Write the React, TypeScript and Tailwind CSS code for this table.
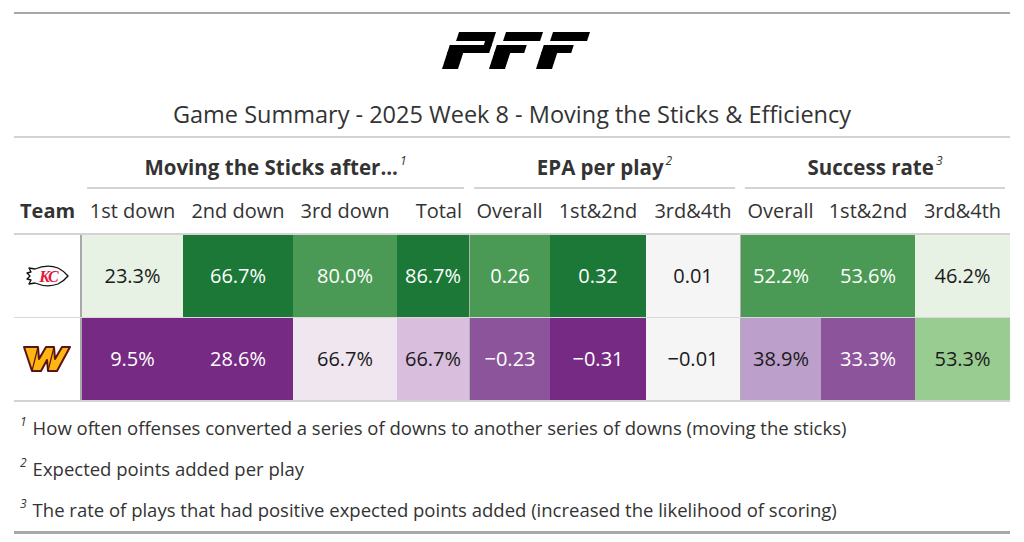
const GRID = "grid grid-cols-[68px_101px_110px_104px_72px_81px_96px_94px_81px_94px_95px]";

type Cell = { v: string; bg: string; fg: string; edge?: boolean };

const kc: Cell[] = [
  { v: "23.3%", bg: "bg-[#e7f2e4]", fg: "text-[#1a1a1a]" },
  { v: "66.7%", bg: "bg-[#1b7837]", fg: "text-white" },
  { v: "80.0%", bg: "bg-[#4a9a55]", fg: "text-white" },
  { v: "86.7%", bg: "bg-[#1b7837]", fg: "text-white" },
  { v: "0.26", bg: "bg-[#4a9a55]", fg: "text-white", edge: true },
  { v: "0.32", bg: "bg-[#1b7837]", fg: "text-white" },
  { v: "0.01", bg: "bg-[#f5f5f5]", fg: "text-[#1a1a1a]" },
  { v: "52.2%", bg: "bg-[#4a9a55]", fg: "text-white", edge: true },
  { v: "53.6%", bg: "bg-[#4a9a55]", fg: "text-white" },
  { v: "46.2%", bg: "bg-[#e7f2e4]", fg: "text-[#1a1a1a]" },
];

const was: Cell[] = [
  { v: "9.5%", bg: "bg-[#762a83]", fg: "text-white" },
  { v: "28.6%", bg: "bg-[#762a83]", fg: "text-white" },
  { v: "66.7%", bg: "bg-[#f0e6f0]", fg: "text-[#1a1a1a]" },
  { v: "66.7%", bg: "bg-[#d9bfdd]", fg: "text-[#1a1a1a]" },
  { v: "\u22120.23", bg: "bg-[#8c559b]", fg: "text-white", edge: true },
  { v: "\u22120.31", bg: "bg-[#762a83]", fg: "text-white" },
  { v: "\u22120.01", bg: "bg-[#f5f5f5]", fg: "text-[#1a1a1a]" },
  { v: "38.9%", bg: "bg-[#bd9fcb]", fg: "text-[#1a1a1a]", edge: true },
  { v: "33.3%", bg: "bg-[#8c559b]", fg: "text-white" },
  { v: "53.3%", bg: "bg-[#99cc91]", fg: "text-[#1a1a1a]" },
];

function PffLogo() {
  return (
    <svg width="148" height="37" viewBox="0 0 148 37">
      <g transform="translate(12 0) skewX(-18)" fill="#000">
        {/* P */}
        <rect x="5" y="0" width="37" height="9" />
        <rect x="34" y="8" width="8" height="6" />
        <rect x="0" y="13" width="42" height="8" />
        <rect x="0" y="20" width="16" height="17" />
        {/* F */}
        <rect x="52" y="0" width="37" height="9" />
        <rect x="47" y="13" width="30" height="8" />
        <rect x="47" y="20" width="16" height="17" />
        {/* F */}
        <rect x="99" y="0" width="37" height="9" />
        <rect x="94" y="13" width="30" height="8" />
        <rect x="94" y="20" width="16" height="17" />
      </g>
    </svg>
  );
}

function ChiefsLogo() {
  return (
    <svg width="44" height="24" viewBox="0 0 44 24">
      <path
        d="M4 4 L10 5 Q22 0 33 4 Q39 7 43 12 Q39 17 33 20 Q22 24 10 19 L4 20 L6 16 L2 15 L5 12 L2 9 L6 8 Z"
        fill="#fff"
        stroke="#111"
        strokeWidth="1.3"
        strokeLinejoin="round"
      />
      <text x="23" y="17.5" textAnchor="middle" fontSize="16" fontWeight="900" fontStyle="italic" fontFamily="Liberation Serif, serif" fill="#e31837" letterSpacing="-2">
        KC
      </text>
    </svg>
  );
}

function CommandersLogo() {
  return (
    <svg width="50" height="28" viewBox="0 0 50 28">
      <polygon
        points="2,2 16,2 17,14 24,2 32,2 33,14 40,2 48,2 35,26 26,26 25,15 19,26 10,26"
        fill="#ffb612"
        stroke="#5a1414"
        strokeWidth="2"
        strokeLinejoin="round"
      />
      <path d="M16 2 L10 26 M32 2 L26 26" stroke="#5a1414" strokeWidth="1.2" />
    </svg>
  );
}

function Sup({ n }: { n: string }) {
  return <span className="relative -top-[10px] ml-[2px] text-[12px] italic font-normal">{n}</span>;
}

function DataRow({ logo, cells, last }: { logo: React.ReactNode; cells: Cell[]; last?: boolean }) {
  return (
    <div className={`${GRID} ${last ? "" : "border-b border-[#d9d9d9]"}`}>
      <div className="h-[82px] flex items-center justify-center border-r-2 border-[#a8a8a8] bg-white">{logo}</div>
      {cells.map((c, i) => (
        <div
          key={i}
          className={`h-[82px] flex items-center justify-center text-[20px] ${c.bg} ${c.fg} ${c.edge ? "border-l border-[#b0b0b0]" : ""}`}
        >
          {c.v}
        </div>
      ))}
    </div>
  );
}

export default function App() {
  return (
    <div className="w-[1024px] h-[542px] bg-white px-[14px] pt-[12px] text-[#333] font-['Open_Sans',sans-serif]">
      <div className="border-t-2 border-[#a8a8a8]">
        {/* heading */}
        <div className="flex flex-col items-center border-b-2 border-[#d3d3d3] pb-[7px]">
          <div className="mt-[18px] ml-[8px]">
            <PffLogo />
          </div>
          <div className="mt-[30px] h-[30px] leading-[30px] text-[23.5px] text-[#333]">
            Game Summary - 2025 Week 8 - Moving the Sticks &amp; Efficiency
          </div>
        </div>

        {/* spanners */}
        <div className={GRID}>
          <div className="h-[51px]" />
          <div className="col-span-4 flex flex-col justify-end">
            <div className="mx-[5px] border-b-2 border-[#d3d3d3] pb-[2px] text-center text-[20.5px] font-bold leading-[28px]">
              Moving the Sticks after...<Sup n="1" />
            </div>
          </div>
          <div className="col-span-3 flex flex-col justify-end">
            <div className="mx-[5px] border-b-2 border-[#d3d3d3] pb-[2px] text-center text-[20.5px] font-bold leading-[28px]">
              EPA per play<Sup n="2" />
            </div>
          </div>
          <div className="col-span-3 flex flex-col justify-end">
            <div className="mx-[5px] border-b-2 border-[#d3d3d3] pb-[2px] text-center text-[20.5px] font-bold leading-[28px]">
              Success rate<Sup n="3" />
            </div>
          </div>
        </div>

        {/* column labels */}
        <div className={`${GRID} border-b-2 border-[#d3d3d3] text-[20px]`}>
          <div className="h-[44px] flex items-center pl-[6px] font-bold">Team</div>
          <div className="h-[44px] flex items-center justify-center">1st down</div>
          <div className="h-[44px] flex items-center justify-center">2nd down</div>
          <div className="h-[44px] flex items-center justify-center">3rd down</div>
          <div className="h-[44px] flex items-center justify-end pr-[7px]">Total</div>
          <div className="h-[44px] flex items-center justify-center">Overall</div>
          <div className="h-[44px] flex items-center justify-center">1st&amp;2nd</div>
          <div className="h-[44px] flex items-center justify-center">3rd&amp;4th</div>
          <div className="h-[44px] flex items-center justify-center">Overall</div>
          <div className="h-[44px] flex items-center justify-center">1st&amp;2nd</div>
          <div className="h-[44px] flex items-center justify-center">3rd&amp;4th</div>
        </div>

        {/* body */}
        <div className="border-b-2 border-[#d3d3d3]">
          <DataRow logo={<ChiefsLogo />} cells={kc} />
          <DataRow logo={<CommandersLogo />} cells={was} last />
        </div>

        {/* footnotes */}
        <div className="border-b-[3px] border-[#a8a8a8] pt-[5px] pb-[1px] text-[18.5px]">
          <div className="h-[41px] flex items-center pl-[6px]">
            <span className="relative -top-[6px] mr-[6px] text-[12px] italic">1</span>
            How often offenses converted a series of downs to another series of downs (moving the sticks)
          </div>
          <div className="h-[41px] flex items-center pl-[6px]">
            <span className="relative -top-[6px] mr-[6px] text-[12px] italic">2</span>
            Expected points added per play
          </div>
          <div className="h-[41px] flex items-center pl-[6px]">
            <span className="relative -top-[6px] mr-[6px] text-[12px] italic">3</span>
            The rate of plays that had positive expected points added (increased the likelihood of scoring)
          </div>
        </div>
      </div>
    </div>
  );
}
